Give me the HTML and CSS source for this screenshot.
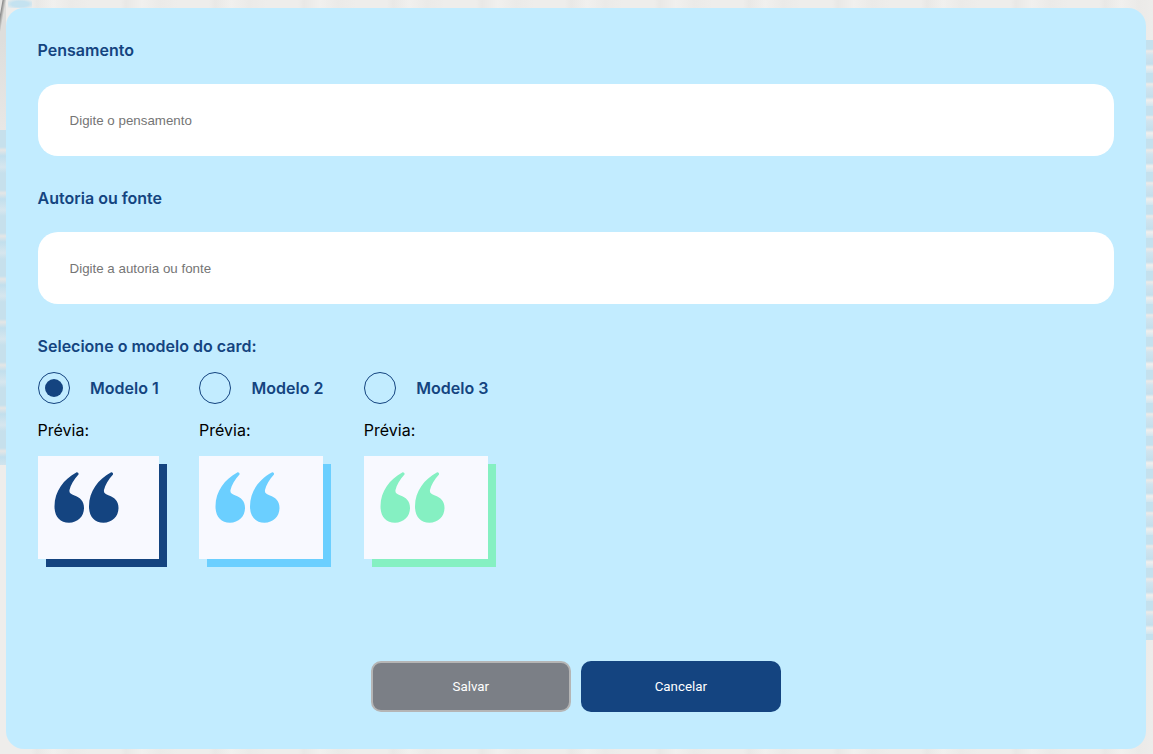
FILE: index.html
```html
<!DOCTYPE html>
<html lang="pt-BR">
<head>
<meta charset="utf-8">
<title>Novo pensamento</title>
<link rel="stylesheet" href="styles.css">
</head>
<body>
<svg class="defs" width="0" height="0" aria-hidden="true">
  <symbol id="quote" viewBox="0 0 65 51">
    <path d="M22.300.5C10 7 .5 19 .5 34.500.5 44.500 6 50.700 15 50.700c8.500 0 15-6.200 15-14.700 0-7.500-4.500-10.500-9.500-12.500-4-1.500-5.500-3-5-5.500 1-5 4.500-10.500 9-15.500.5-1-1-2.700-2.200-2z"/>
    <path d="M22.300.5C10 7 .5 19 .5 34.500.5 44.500 6 50.700 15 50.700c8.500 0 15-6.200 15-14.700 0-7.500-4.500-10.500-9.500-12.500-4-1.500-5.500-3-5-5.500 1-5 4.500-10.500 9-15.500.5-1-1-2.700-2.200-2z" transform="translate(34.500 0)"/>
  </symbol>
</svg>
<main class="panel">
  <form class="form">
    <div class="field">
      <label class="label" for="p">Pensamento</label>
      <input class="input" id="p" type="text" placeholder="Digite o pensamento">
    </div>
    <div class="field">
      <label class="label" for="a">Autoria ou fonte</label>
      <input class="input" id="a" type="text" placeholder="Digite a autoria ou fonte">
    </div>
    <p class="label models-title">Selecione o modelo do card:</p>
    <div class="models">
      <div class="model model-dark">
        <div class="choice"><span class="radio radio-on"></span><span class="choice-name">Modelo 1</span></div>
        <p class="preview-title">Prévia:</p>
        <div class="card"><svg class="quote"><use href="#quote"/></svg></div>
      </div>
      <div class="model model-blue">
        <div class="choice"><span class="radio"></span><span class="choice-name">Modelo 2</span></div>
        <p class="preview-title">Prévia:</p>
        <div class="card"><svg class="quote"><use href="#quote"/></svg></div>
      </div>
      <div class="model model-green">
        <div class="choice"><span class="radio"></span><span class="choice-name">Modelo 3</span></div>
        <p class="preview-title">Prévia:</p>
        <div class="card"><svg class="quote"><use href="#quote"/></svg></div>
      </div>
    </div>
    <div class="actions">
      <button class="btn btn-save" type="button">Salvar</button>
      <button class="btn btn-cancel" type="button">Cancelar</button>
    </div>
  </form>
</main>
</body>
</html>
```
FILE: styles.css
```css
* { box-sizing: border-box; }
html, body { margin: 0; height: 754px; overflow: hidden; }
body {
  padding: 8px 7px 5px 5.600px;
  background-color: #eeedeb;
  background-image:
    radial-gradient(ellipse at center, #c4e2f0 0, #c4e2f0 50%, rgba(196, 226, 240, 0) 100%),
    linear-gradient(100deg, #e6e5e3 0, #e6e5e3 2px, #8e8e8e 3px, #a8a8a6 4px, #dededc 6px),
    linear-gradient(#dededc, #e8e7e5),
    repeating-linear-gradient(#c6e0ec 0, #c6e0ec 17px, #e4e6e6 20px, #c2dfed 26px, #d6e6ee 37px, #c6e0ec 43px),
    repeating-linear-gradient(#c4e1ee 0, #c4e1ee 9px, #eceae8 11px, #d0e4ee 15px, #c4dfec 24px, #f0efed 27px, #cfe5ef 33px),
    repeating-linear-gradient(90deg, #eeedeb 0, #eeedeb 31px, #e9e8e6 37px, #f1f0ee 53px, #ebeae8 71px, #eeedeb 89px);
  background-repeat: no-repeat;
  background-size: 24px 8px, 6px 40px, 6px 90px, 6px 335px, 7px 600px, 100% 100%;
  background-position: 8px 0, 0 0, 0 40px, 0 130px, 100% 40px, 0 0;
}
.defs { position: absolute; }
.panel {
  height: 741px;
  padding: 32px;
  background: #c2ecff;
  border-radius: 18px;
}
.form { display: flex; flex-direction: column; height: 100%; }
.field { display: flex; flex-direction: column; margin-bottom: 32px; }
.label {
  margin: 0;
  font: 600 16px/20px Inter, sans-serif;
  color: #144480;
}
.input {
  height: 72px;
  margin-top: 24px;
  padding: 0 32px;
  border: 0;
  border-radius: 20px;
  background: #fff;
  font: 13.333px "Liberation Sans", Arial, sans-serif;
  outline: none;
}
.input::placeholder { color: #757575; opacity: 1; }
.models-title { margin-top: 0; }
.models { display: flex; gap: 40.350px; margin-top: 16px; align-items: flex-start; }
.model { display: flex; flex-direction: column; }
.choice { display: flex; align-items: center; gap: 20.500px; height: 32px; }
.radio {
  flex: none;
  width: 32px;
  height: 32px;
  border: 1px solid #144480;
  border-radius: 50%;
  display: flex;
  align-items: center;
  justify-content: center;
}
.radio-on::after {
  content: "";
  width: 18px;
  height: 18px;
  border-radius: 50%;
  background: #144480;
}
.choice-name { font: 600 16px/20px Inter, sans-serif; color: #144480; white-space: nowrap; }
.preview-title { margin: 16px 0 0; font: 400 16px/20px Inter, sans-serif; color: #000; }
.card {
  height: 103px;
  margin-top: 16px;
  padding: 16px;
  background: #f8f9ff;
}
.quote { display: block; width: 65px; height: 51px; }
.model-dark .card { box-shadow: 8px 8px 0 #144480; }
.model-dark .quote { fill: #144480; }
.model-blue .card { box-shadow: 8px 8px 0 #6bcfff; }
.model-blue .quote { fill: #6bcfff; }
.model-green .card { box-shadow: 8px 8px 0 #85f0c2; }
.model-green .quote { fill: #85f0c2; }
.actions { display: flex; justify-content: center; gap: 10px; margin-top: auto; margin-bottom: 5px; }
.btn {
  width: 200px;
  height: 51px;
  border-radius: 10px;
  color: #fff;
  font: 400 13.333px Roboto, sans-serif;
}
.btn-save { background: #7b7f86; border: 2px solid #b5b5b5; }
.btn-cancel { background: #144480; border: 0; }
```
